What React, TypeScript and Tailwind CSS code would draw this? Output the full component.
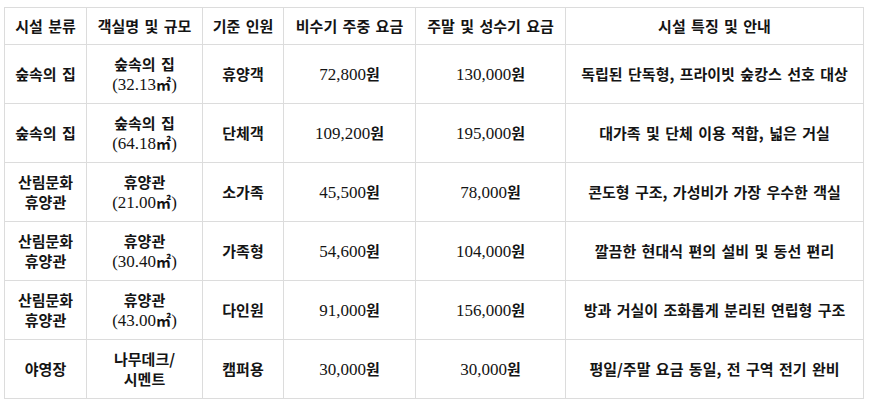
const headers = ["시설 분류", "객실명 및 규모", "기준 인원", "비수기 주중 요금", "주말 및 성수기 요금", "시설 특징 및 안내"];

const widths = ["w-[82px]", "w-[116px]", "w-[81px]", "w-[132px]", "w-[150px]", "w-[298px]"];

const rows = [
  { type: ["숲속의 집"], room: ["숲속의 집", "(32.13㎡)"], people: "휴양객", off: "72,800원", peak: "130,000원", note: "독립된 단독형, 프라이빗 숲캉스 선호 대상" },
  { type: ["숲속의 집"], room: ["숲속의 집", "(64.18㎡)"], people: "단체객", off: "109,200원", peak: "195,000원", note: "대가족 및 단체 이용 적합, 넓은 거실" },
  { type: ["산림문화", "휴양관"], room: ["휴양관", "(21.00㎡)"], people: "소가족", off: "45,500원", peak: "78,000원", note: "콘도형 구조, 가성비가 가장 우수한 객실" },
  { type: ["산림문화", "휴양관"], room: ["휴양관", "(30.40㎡)"], people: "가족형", off: "54,600원", peak: "104,000원", note: "깔끔한 현대식 편의 설비 및 동선 편리" },
  { type: ["산림문화", "휴양관"], room: ["휴양관", "(43.00㎡)"], people: "다인원", off: "91,000원", peak: "156,000원", note: "방과 거실이 조화롭게 분리된 연립형 구조" },
  { type: ["야영장"], room: ["나무데크/", "시멘트"], people: "캠퍼용", off: "30,000원", peak: "30,000원", note: "평일/주말 요금 동일, 전 구역 전기 완비" },
];

// digits and brackets are set in a larger serif, hangul in bold gothic
function T({ text }: { text: string }) {
  const parts = text.split(/([()0-9][()0-9.,]*)/).filter(Boolean);
  return (
    <>
      {parts.map((p, i) =>
        /^[()0-9]/.test(p) ? (
          <span key={i} className="font-normal text-[17px] leading-[20px]" style={{ fontFamily: '"Liberation Serif", serif' }}>
            {p}
          </span>
        ) : (
          <span key={i}>{p}</span>
        )
      )}
    </>
  );
}

function Lines({ items }: { items: string[] }) {
  return (
    <>
      {items.map((t) => (
        <div key={t}>
          <T text={t} />
        </div>
      ))}
    </>
  );
}

export default function App() {
  const cell = "border border-[#dcdcdc] text-center align-middle px-1";
  return (
    <div
      className="bg-white min-h-screen pl-[4px] pt-[7px] text-[#141414] text-[15px] leading-[20px] font-bold [word-spacing:2px]"
      style={{ fontFamily: '"Noto Sans CJK KR", sans-serif' }}
    >
      <table className="border-collapse table-fixed w-[860px]">
        <thead>
          <tr>
            {headers.map((h, i) => (
              <th key={h} className={`${cell} ${widths[i]} py-[8px] font-bold`}>
                {h}
              </th>
            ))}
          </tr>
        </thead>
        <tbody>
          {rows.map((r, i) => (
            <tr key={i} className="h-[59px]">
              <td className={cell}>
                <Lines items={r.type} />
              </td>
              <td className={cell}>
                <Lines items={r.room} />
              </td>
              <td className={cell}>{r.people}</td>
              <td className={cell}>
                <T text={r.off} />
              </td>
              <td className={cell}>
                <T text={r.peak} />
              </td>
              <td className={cell}>{r.note}</td>
            </tr>
          ))}
        </tbody>
      </table>
    </div>
  );
}
